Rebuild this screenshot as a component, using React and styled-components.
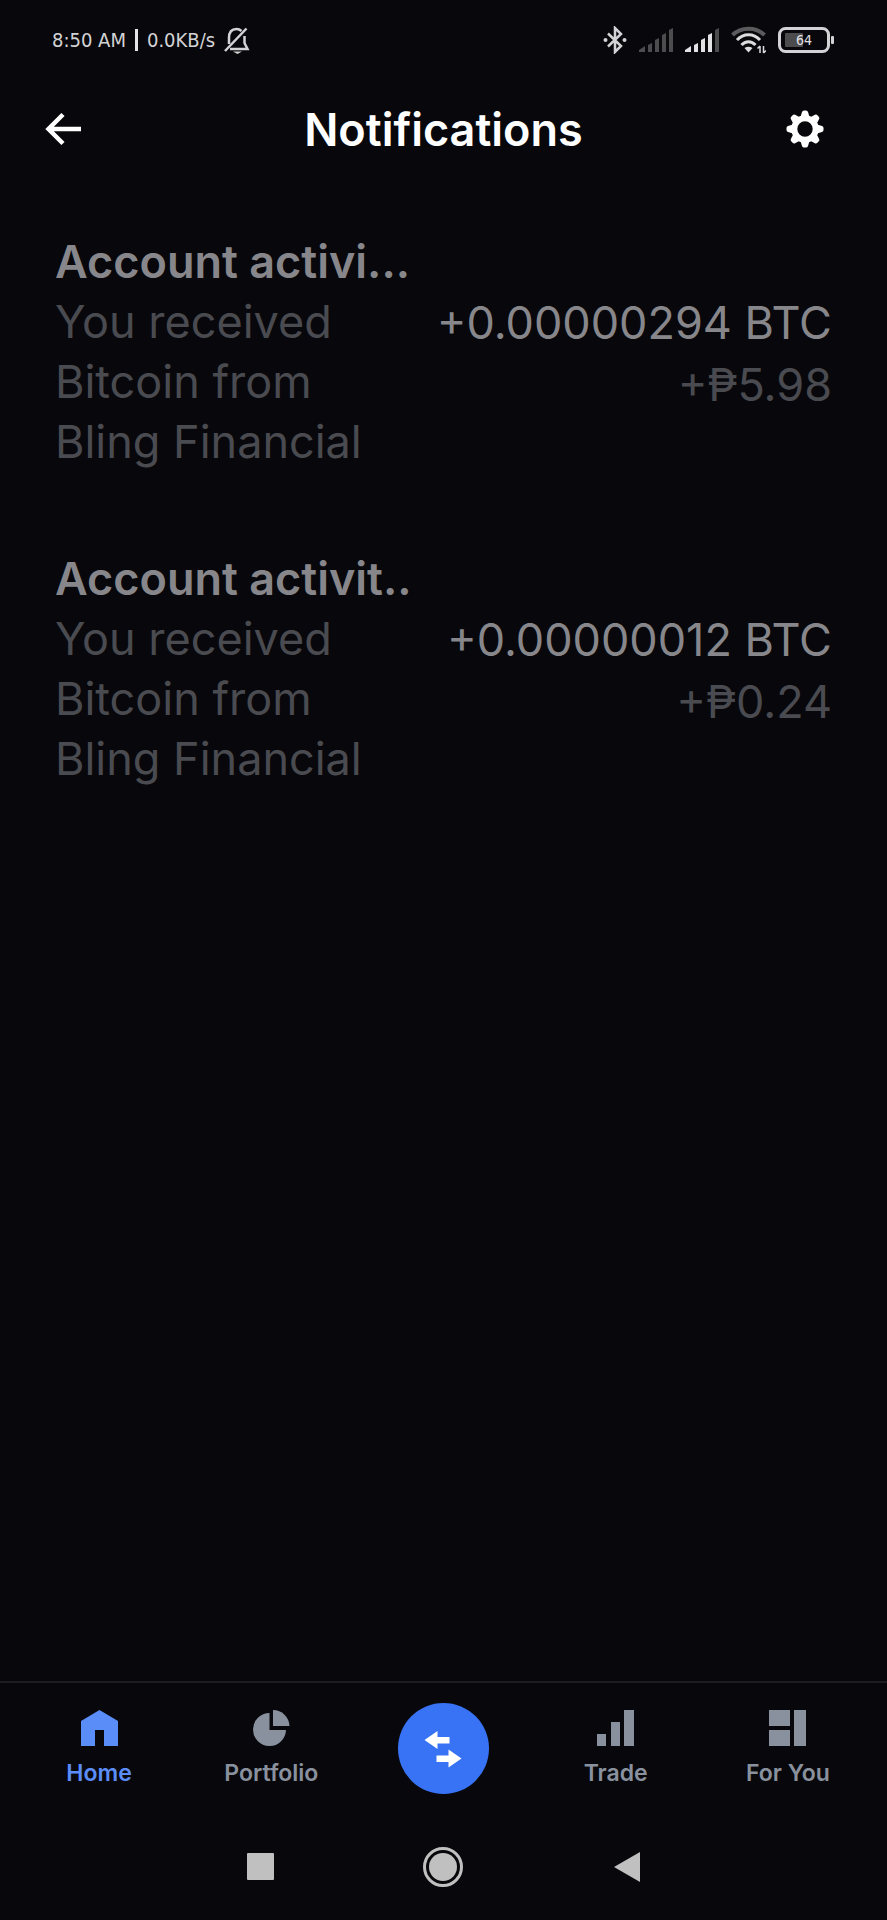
import React from "react";
import styled, { createGlobalStyle } from "styled-components";

const GlobalStyle = createGlobalStyle`
  * {
    box-sizing: border-box;
  }

  body {
    margin: 0;
    background: #08080c;
    color: #ffffff;
    font-family: Inter, "Liberation Sans", sans-serif;
  }
`;

const Screen = styled.div`
  min-height: 100vh;
  display: flex;
  flex-direction: column;
`;

const StatusBar = styled.div`
  height: 80px;
  padding: 0 52px;
  display: flex;
  align-items: center;
  justify-content: space-between;
  color: #d3d3d5;
`;

const StatusGroup = styled.div`
  display: flex;
  align-items: center;
  gap: ${(props) => props.$gap};
`;

const StatusText = styled.span`
  font-family: "DejaVu Sans Condensed", "DejaVu Sans", sans-serif;
  font-size: 20px;
  line-height: 28px;
`;

const Divider = styled.span`
  width: 3px;
  height: 22px;
  background: #e4e4e6;
`;

const Header = styled.header`
  height: 100px;
  padding: 0 45px;
  display: grid;
  grid-template-columns: 74px 1fr 74px;
  align-items: center;
`;

const IconButton = styled.button`
  display: flex;
  padding: 0;
  border: 0;
  background: none;
  color: #ffffff;
  cursor: pointer;
`;

const PageTitle = styled.h1`
  margin: 0;
  font-size: 45px;
  font-weight: 600;
  line-height: 60px;
  text-align: center;
`;

const List = styled.main`
  flex: 1;
  padding: 52px 55px;
  display: flex;
  flex-direction: column;
  gap: 77px;
`;

const Activity = styled.article`
  font-size: 45px;
  line-height: 60px;
`;

const ActivityTitle = styled.h2`
  margin: 0;
  color: #87878b;
  font-size: 45px;
  font-weight: 600;
`;

const ActivityBody = styled.div`
  display: flex;
  justify-content: space-between;
`;

const Description = styled.p`
  margin: 0;
  max-width: 350px;
  color: #4a4b50;
`;

const Amounts = styled.div`
  text-align: right;
  line-height: 62px;
  white-space: nowrap;
`;

const Amount = styled.div`
  color: ${(props) => (props.$muted ? "#4a4b50" : "#87878b")};
`;

const TabBar = styled.nav`
  height: 140px;
  padding: 20px 13px 0;
  border-top: 2px solid #1c1d21;
  display: grid;
  grid-template-columns: repeat(5, 1fr);
  justify-items: center;
  align-items: start;
`;

const Tab = styled.a`
  padding-top: 7px;
  display: flex;
  flex-direction: column;
  align-items: center;
  gap: 13px;
  color: ${(props) => (props.$active ? "#5b8df8" : "#8a919e")};
  font-size: 23px;
  font-weight: 600;
  line-height: 28px;
  text-decoration: none;
`;

const SwapButton = styled.button`
  width: 91px;
  height: 91px;
  padding: 0;
  border: 0;
  border-radius: 50%;
  display: flex;
  align-items: center;
  justify-content: center;
  background: #3873f5;
  color: #ffffff;
  cursor: pointer;
`;

const SystemBar = styled.div`
  height: 99px;
  padding: 0 19% 8px;
  display: grid;
  grid-template-columns: repeat(3, 1fr);
  place-items: center;
  color: #c0c0c0;
`;

const SystemButton = styled.button`
  display: flex;
  padding: 0;
  border: 0;
  background: none;
  color: inherit;
`;

const activities = [
  {
    id: 1,
    title: "Account activi...",
    text: "You received Bitcoin from Bling Financial",
    btc: "+0.00000294 BTC",
    php: "+₱5.98",
  },
  {
    id: 2,
    title: "Account activit..",
    text: "You received Bitcoin from Bling Financial",
    btc: "+0.00000012 BTC",
    php: "+₱0.24",
  },
];

const MutedBell = () => (
  <svg width="26" height="27" viewBox="0 0 26 27" fill="none" stroke="currentColor" strokeWidth="2.500">
    <path d="M5 17V11C5 5 8 2 12.500 2C14.500 2 16 2.500 17.500 4M20.500 9V16L23.500 22H6" />
    <path d="M1 24L22.500 1.500" />
    <path d="M9 24.500H18L13.500 27Z" fill="currentColor" stroke="none" />
  </svg>
);

const Bluetooth = () => (
  <svg width="24" height="28" viewBox="0 0 24 28" fill="none" stroke="currentColor" strokeWidth="2.500">
    <path d="M5 7.500L18 20L12 26V2L18 8L5 20.500" />
    <circle cx="2.500" cy="14" r="2" fill="currentColor" stroke="none" />
    <circle cx="21.500" cy="14" r="2" fill="currentColor" stroke="none" />
  </svg>
);

const Signal = ({ level }) => (
  <svg width="34" height="24" viewBox="0 0 34 24">
    {[
      "M0 24V22L6 18V24Z",
      "M9 24V17L13 15V24Z",
      "M16 24V12L20 10V24Z",
      "M23 24V7L27 5V24Z",
      "M30 24V2L34 0V24Z",
    ].map((d, i) => (
      <path key={d} d={d} fill={i < level ? "#e2e2e4" : "#4c4c4f"} />
    ))}
  </svg>
);

const Wifi = () => (
  <svg width="35" height="28" viewBox="0 0 35 28" fill="none" strokeWidth="3">
    <path d="M1.500 9C10 .500 25 .500 33.500 9" stroke="#5b5b5e" strokeWidth="4" />
    <path d="M6 14C12.500 7 22.500 7 29 14" stroke="#dcdcde" />
    <path d="M10.500 19C14.500 14.500 20.500 14.500 24.500 19" stroke="#dcdcde" />
    <path d="M13.500 22Q17.500 19.500 21.500 22L17.500 26.500Z" fill="#dcdcde" />
    <path d="M29 20V27M26.500 22.500L29 20M32.500 20V27M35 24.500L32.500 27" stroke="#dcdcde" strokeWidth="1.500" />
  </svg>
);

const Battery = () => (
  <svg width="57" height="26" viewBox="0 0 57 26">
    <rect x="1.500" y="1.500" width="49" height="23" rx="6" fill="none" stroke="#d3d3d5" strokeWidth="3" />
    <rect x="7" y="6" width="18" height="14" rx="1" fill="#4c4c4f" />
    <rect x="53" y="9" width="3" height="8" rx="1" fill="#d3d3d5" />
    <text x="26" y="18" textAnchor="middle" fontSize="14" fill="#e2e2e4" fontFamily="DejaVu Sans Condensed, sans-serif">
      64
    </text>
  </svg>
);

const ArrowLeft = () => (
  <svg width="37" height="48" viewBox="0 0 37 48" fill="none" stroke="currentColor" strokeWidth="4.500">
    <path d="M36 23H3M18 8.500L3.500 23L18 37.500" />
  </svg>
);

const Gear = () => (
  <svg width="74" height="48" viewBox="-37 -23 74 48">
    <circle r="10.700" fill="none" stroke="currentColor" strokeWidth="6" />
    {[0, 45, 90, 135, 180, 225, 270, 315].map((angle) => (
      <path
        key={angle}
        d="M-4.500 -12L-3 -17Q-2.500 -18.500 -1 -18.500H1Q2.500 -18.500 3 -17L4.500 -12Z"
        fill="currentColor"
        transform={`rotate(${angle})`}
      />
    ))}
  </svg>
);

const HomeIcon = () => (
  <svg width="37" height="36" viewBox="0 0 37 36" fill="currentColor">
    <path d="M0 36V11L18.500 0L37 11V36H23V20H14V36Z" />
  </svg>
);

const PieIcon = () => (
  <svg width="37" height="36" viewBox="0 0 37 36" fill="currentColor">
    <path d="M16.500 3V20H33A16.500 16.500 0 1 1 16.500 3Z" />
    <path d="M20 0A16.500 16.500 0 0 1 36.500 16H20Z" />
  </svg>
);

const BarsIcon = () => (
  <svg width="37" height="36" viewBox="0 0 37 36" fill="currentColor">
    <path d="M0 24H9V36H0ZM14 12H23V36H14ZM27 0H37V36H27Z" />
  </svg>
);

const BlocksIcon = () => (
  <svg width="37" height="36" viewBox="0 0 37 36" fill="currentColor">
    <path d="M0 0H21V16H0ZM0 20H21V36H0ZM25 0H37V36H25Z" />
  </svg>
);

const SwapIcon = () => (
  <svg width="38" height="38" viewBox="0 0 38 38" fill="currentColor">
    <path d="M0.500 10L13.500 1V7H25.500V13.500H13.500V19Z" />
    <path d="M37.500 28.500L24.500 19.500V25.500H12.500V32H24.500V37.500Z" />
  </svg>
);

const App = () => {
  return (
    <Screen>
      <GlobalStyle />
      <StatusBar>
        <StatusGroup $gap="9px">
          <StatusText>8:50 AM</StatusText>
          <Divider />
          <StatusText>0.0KB/s</StatusText>
          <MutedBell />
        </StatusGroup>
        <StatusGroup $gap="12px">
          <Bluetooth />
          <Signal level={0} />
          <Signal level={4} />
          <Wifi />
          <Battery />
        </StatusGroup>
      </StatusBar>

      <Header>
        <IconButton aria-label="Back">
          <ArrowLeft />
        </IconButton>
        <PageTitle>Notifications</PageTitle>
        <IconButton aria-label="Settings">
          <Gear />
        </IconButton>
      </Header>

      <List>
        {activities.map((item) => (
          <Activity key={item.id}>
            <ActivityTitle>{item.title}</ActivityTitle>
            <ActivityBody>
              <Description>{item.text}</Description>
              <Amounts>
                <Amount>{item.btc}</Amount>
                <Amount $muted>{item.php}</Amount>
              </Amounts>
            </ActivityBody>
          </Activity>
        ))}
      </List>

      <TabBar>
        <Tab href="#home" $active>
          <HomeIcon />
          Home
        </Tab>
        <Tab href="#portfolio">
          <PieIcon />
          Portfolio
        </Tab>
        <SwapButton aria-label="Swap">
          <SwapIcon />
        </SwapButton>
        <Tab href="#trade">
          <BarsIcon />
          Trade
        </Tab>
        <Tab href="#for-you">
          <BlocksIcon />
          For You
        </Tab>
      </TabBar>

      <SystemBar>
        <SystemButton aria-label="Recent apps">
          <svg width="27" height="27" fill="currentColor">
            <rect width="27" height="27" rx="1" />
          </svg>
        </SystemButton>
        <SystemButton aria-label="Home screen">
          <svg width="40" height="40" fill="currentColor">
            <circle cx="20" cy="20" r="18.500" fill="none" stroke="currentColor" strokeWidth="3" />
            <circle cx="20" cy="20" r="14" />
          </svg>
        </SystemButton>
        <SystemButton aria-label="System back">
          <svg width="26" height="30" fill="currentColor">
            <path d="M0 15L26 0V30Z" />
          </svg>
        </SystemButton>
      </SystemBar>
    </Screen>
  );
};

export default App;
